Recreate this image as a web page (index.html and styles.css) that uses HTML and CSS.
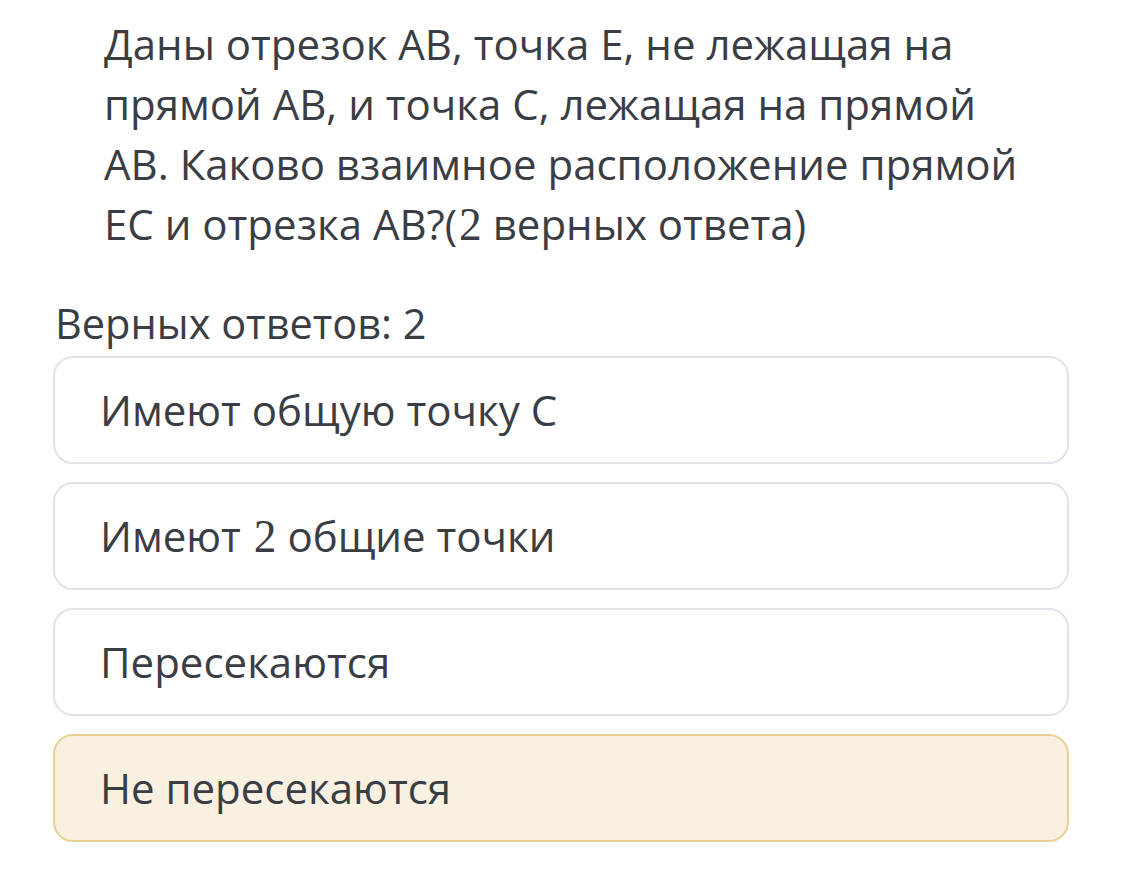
FILE: index.html
```html
<!DOCTYPE html>
<html lang="ru">
<head>
<meta charset="utf-8">
<link rel="stylesheet" href="styles.css">
</head>
<body>
<main class="page">
  <p class="question">Даны отрезок АВ, точка Е, не лежащая на прямой АВ, и точка С, лежащая на прямой АВ. Каково взаимное расположение прямой ЕС и отрезка АВ?(<span class="math">2</span> верных ответа)</p>
  <div class="count">Верных ответов: 2</div>
  <ul class="options">
    <li class="option"><span class="label">Имеют общую точку С</span></li>
    <li class="option"><span class="label">Имеют <span class="math">2</span> общие точки</span></li>
    <li class="option"><span class="label">Пересекаются</span></li>
    <li class="option selected"><span class="label">Не пересекаются</span></li>
  </ul>
</main>
</body>
</html>
```
FILE: styles.css
```css
html, body {
  margin: 0;
  padding: 0;
  background: #ffffff;
}
body {
  font-family: "Open Sans", "Noto Sans", sans-serif;
  color: #3b3d45;
}
.page {
  padding: 14px 53px 0 53px;
  width: 1016px;
}
.question {
  margin: 0 0 0 51px;
  font-size: 42px;
  line-height: 60px;
  width: 935px;
}
.math {
  font-family: "Liberation Serif", "DejaVu Serif", serif;
  font-size: 1.08em;
  line-height: 1;
  margin-left: 2px;
}
.count {
  margin-top: 41px;
  font-size: 41.5px;
  line-height: 56px;
  padding-left: 2px;
}
.options {
  list-style: none;
  margin: 5px 0 0 0;
  padding: 0;
  display: flex;
  flex-direction: column;
  gap: 18px;
}
.option {
  box-sizing: border-box;
  height: 108px;
  border: 2px solid #e3e3ea;
  border-radius: 20px;
  display: flex;
  align-items: center;
  padding-left: 45px;
  font-size: 42px;
  padding-bottom: 2px;
}
.option.selected {
  background: #f8f1e2;
  border-color: #e8d193;
}
```
